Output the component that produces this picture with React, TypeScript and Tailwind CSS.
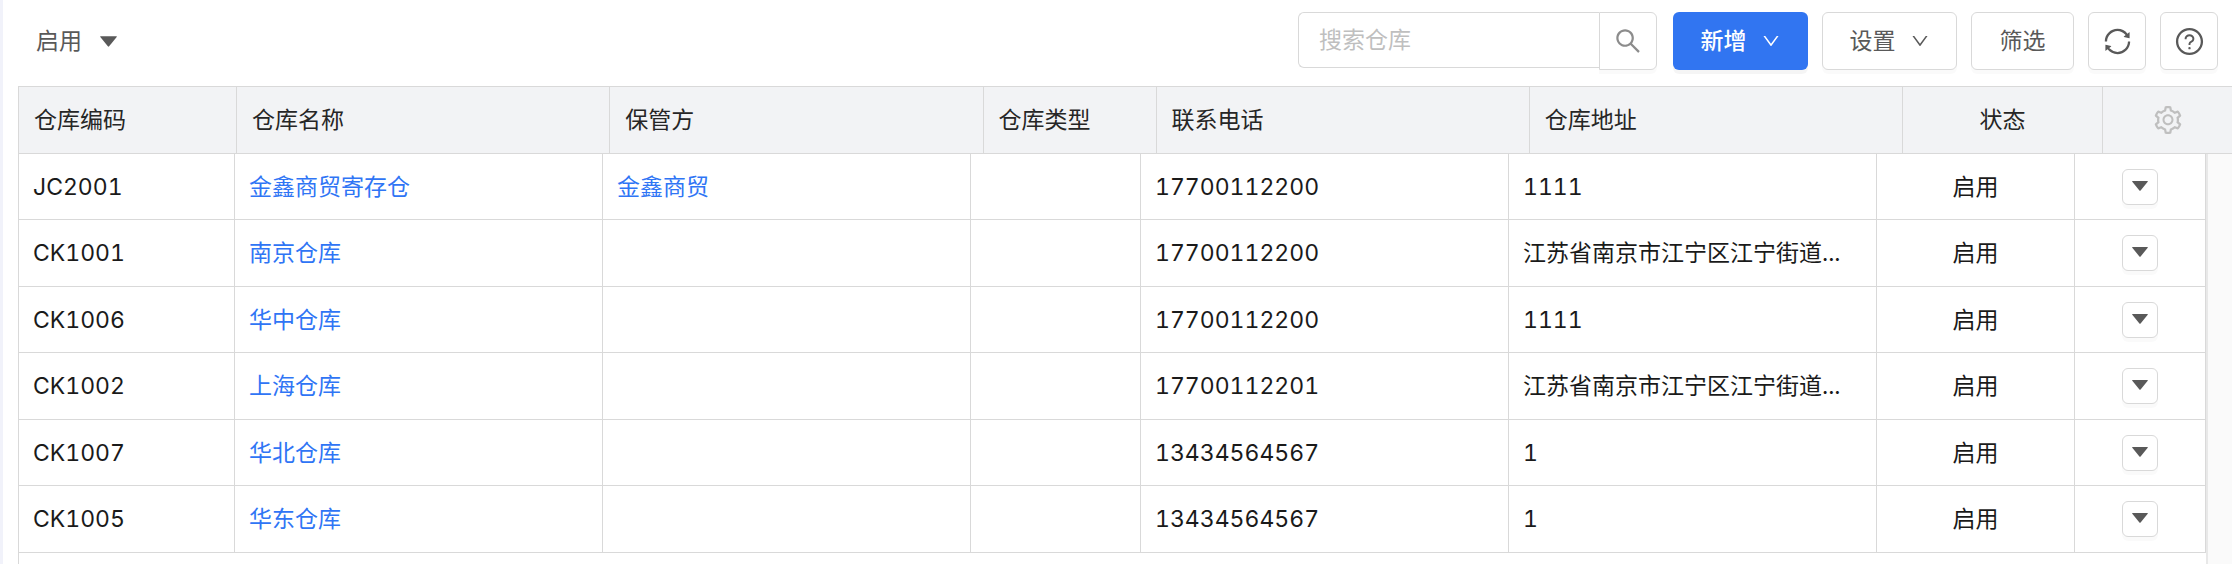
import type { ReactNode } from "react";
import {
  AiOutlineDown,
  AiOutlineQuestionCircle,
  AiOutlineSearch,
  AiOutlineSetting,
  AiOutlineSync,
} from "react-icons/ai";

interface Warehouse {
  code: string;
  name: string;
  keeper?: string;
  type?: string;
  phone: string;
  address: string;
}

const warehouses: Warehouse[] = [
  { code: "JC2001", name: "金鑫商贸寄存仓", keeper: "金鑫商贸", phone: "17700112200", address: "1111" },
  { code: "CK1001", name: "南京仓库", phone: "17700112200", address: "江苏省南京市江宁区江宁街道..." },
  { code: "CK1006", name: "华中仓库", phone: "17700112200", address: "1111" },
  { code: "CK1002", name: "上海仓库", phone: "17700112201", address: "江苏省南京市江宁区江宁街道..." },
  { code: "CK1007", name: "华北仓库", phone: "13434564567", address: "1" },
  { code: "CK1005", name: "华东仓库", phone: "13434564567", address: "1" },
];

const headers = ["仓库编码", "仓库名称", "保管方", "仓库类型", "联系电话", "仓库地址"];

function Caret({ className }: { className: string }) {
  return (
    <svg className={className} viewBox="0 0 16 10" fill="#595959">
      <path d="M0.6 0 H15.4 Q16.2 0 15.7 0.7 L8.6 9.5 Q8 10.2 7.4 9.5 L0.3 0.7 Q-0.2 0 0.6 0 Z" />
    </svg>
  );
}

function ToolButton({ className, label, children }: { className: string; label?: string; children: ReactNode }) {
  return (
    <button
      type="button"
      aria-label={label}
      className={`flex h-[58px] items-center justify-center rounded-md border border-[#d9d9d9] bg-white shadow-[0_4px_0_rgba(0,0,0,0.02)] ${className}`}
    >
      {children}
    </button>
  );
}

function Toolbar() {
  return (
    <div className="flex items-start pt-3 pr-[14px] pb-4 text-[#595959]">
      <button type="button" className="flex h-[58px] items-center gap-[18px] pl-[18px]">
        启用
        <Caret className="h-[11px] w-[17px]" />
      </button>
      <form className="mr-4 ml-auto flex items-start" role="search">
        <input
          type="text"
          aria-label="搜索仓库"
          placeholder="搜索仓库"
          className="h-14 w-[301px] rounded-l-md border border-r-0 border-[#d9d9d9] pl-5 outline-none placeholder:text-[#bfbfbf]"
        />
        <button
          type="button"
          aria-label="搜索"
          className="flex h-[58px] w-[58px] items-center justify-center rounded-r-md border border-[#d9d9d9] bg-white text-[#8c8c8c] shadow-[0_4px_0_rgba(0,0,0,0.02)]"
        >
          <AiOutlineSearch size={30} />
        </button>
      </form>
      <div className="flex gap-[14px]">
        <button
          type="button"
          className="flex h-[58px] w-[135px] items-center justify-center gap-[14px] rounded-md bg-[#3175f1] font-medium text-white shadow-[0_4px_0_rgba(0,0,0,0.04)]"
        >
          新增
          <AiOutlineDown size={20} />
        </button>
        <ToolButton className="w-[135px] gap-[14px]">
          设置
          <AiOutlineDown size={20} />
        </ToolButton>
        <ToolButton className="w-[103px]">筛选</ToolButton>
        <ToolButton className="w-[58px]" label="刷新">
          <AiOutlineSync size={31} />
        </ToolButton>
        <ToolButton className="w-[58px]" label="帮助">
          <AiOutlineQuestionCircle size={31} />
        </ToolButton>
      </div>
    </div>
  );
}

function HeaderTable() {
  return (
    <table className="w-full table-fixed border-separate border-spacing-0 bg-[#f2f3f5] text-[#262626]">
      <colgroup>
        <col className="w-[218px]" />
        <col />
        <col />
        <col className="w-[173px]" />
        <col />
        <col />
        <col className="w-[200px]" />
        <col className="w-[129px]" />
      </colgroup>
      <thead>
        <tr className="h-[68px]">
          {headers.map((title) => (
            <th key={title} scope="col" className="border-y border-r border-[#d9d9d9] px-[15px] text-left font-normal">
              {title}
            </th>
          ))}
          <th scope="col" className="border-y border-r border-[#d9d9d9] font-normal">
            状态
          </th>
          <th scope="col" className="border-y border-[#d9d9d9]">
            <button type="button" aria-label="列设置" className="flex w-full justify-center text-[#bfbfbf]">
              <AiOutlineSetting size={32} />
            </button>
          </th>
        </tr>
      </thead>
    </table>
  );
}

function BodyTable() {
  const cell = "border-r border-b border-[#d9d9d9] px-[14px]";

  return (
    <table className="w-full table-fixed border-separate border-spacing-0 text-[#1a1a1a]">
      <colgroup>
        <col className="w-[216px]" />
        <col />
        <col />
        <col className="w-[170px]" />
        <col />
        <col />
        <col className="w-[198px]" />
        <col className="w-[131px]" />
      </colgroup>
      <tbody>
        {warehouses.map((row) => (
          <tr key={row.code} className="odd:h-[66px] even:h-[67px]">
            <td className={cell}>{row.code}</td>
            <td className={cell}>
              <a href="#" className="text-[#2f75f5]">{row.name}</a>
            </td>
            <td className={cell}>
              {row.keeper && <a href="#" className="text-[#2f75f5]">{row.keeper}</a>}
            </td>
            <td className={cell}>{row.type}</td>
            <td className={cell}>{row.phone}</td>
            <td className={`${cell} truncate`}>{row.address}</td>
            <td className={`${cell} text-center`}>启用</td>
            <td className="border-r border-b border-[#d9d9d9]">
              <button
                type="button"
                aria-label="更多操作"
                className="mx-auto flex h-9 w-9 items-start justify-center rounded-md border border-[#d9d9d9] bg-white pt-[11px] shadow-[0_4px_0_rgba(0,0,0,0.02)]"
              >
                <Caret className="h-[10px] w-[16px]" />
              </button>
            </td>
          </tr>
        ))}
      </tbody>
    </table>
  );
}

export default function App() {
  return (
    <div className="flex min-h-screen flex-col border-l-[3px] border-[#f1f2fa] bg-white pl-[15px] font-['Inter','Noto_Sans_CJK_SC',sans-serif] text-[23px] leading-8 tabular-nums">
      <Toolbar />
      <div className="flex flex-1 flex-col border-l border-[#d9d9d9]">
        <HeaderTable />
        <div className="flex flex-1">
          <div className="min-w-0 flex-1">
            <BodyTable />
          </div>
          <div className="w-[26px] border-l-2 border-[#e8e8e8] bg-[#fafafa]" />
        </div>
      </div>
    </div>
  );
}
